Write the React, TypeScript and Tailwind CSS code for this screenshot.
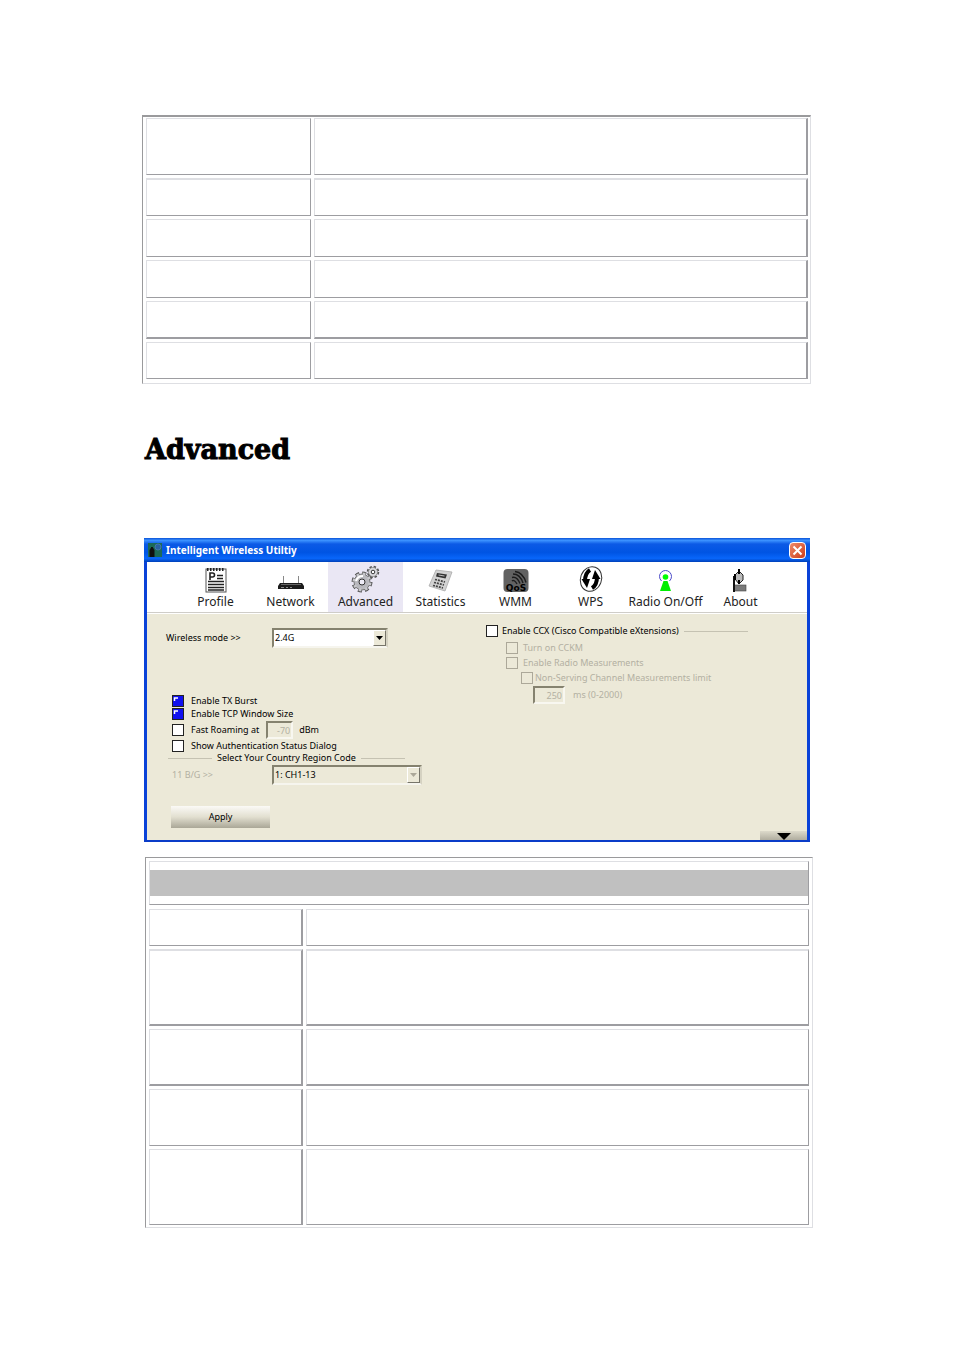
import React from 'react';

interface GridRow {
  height: string;
  edge?: string;
}

const upperRows: GridRow[] = [
  { height: 'h-[57px]' },
  { height: 'h-[38px]', edge: 'border-t-2' },
  { height: 'h-[38px]' },
  { height: 'h-[38px]' },
  { height: 'h-[38px]', edge: 'border-b-2' },
  { height: 'h-[37px]' },
];

const lowerRows: GridRow[] = [
  { height: 'h-[37px]' },
  { height: 'h-[77px]', edge: 'border-y-2' },
  { height: 'h-[57px]', edge: 'border-b-2' },
  { height: 'h-[57px]' },
  { height: 'h-[76px]' },
];

const cell = 'border border-t-[#dedfe3] border-l-[#dedfe3] border-r-[#9d9da1] border-b-[#9d9da1]';
const frame = 'block border border-t-[#9a9a9c] border-l-[#9a9a9c] border-r-[#dedfe3] border-b-[#dedfe3]';

const ProfileIcon = () => (
  <svg width="24" height="26" viewBox="0 0 24 26">
    <rect x="2" y="2" width="20" height="23" fill="#fff" stroke="#555" />
    <path d="M3 2.500h18" stroke="#222" strokeWidth="3" strokeDasharray="1.500 1.500" />
    <path d="M6 13V6h2.500q2 0 2 2t-2 2H6" fill="none" stroke="#222" strokeWidth="1.600" />
    <path d="M13 8.500h6M13 11.500h6M4 14.500h16M4 17.500h16M4 20.500h16M4 23h16" stroke="#222" strokeWidth="1.300" />
  </svg>
);

const NetworkIcon = () => (
  <svg width="28" height="24" viewBox="0 0 28 24">
    <path d="M6.500 7v8M21.500 7v8" stroke="#888" />
    <path d="M3 14h22l2 3v3H1v-3z" fill="#1c1c1c" />
    <path d="M4 15.500h20" stroke="#666" />
    <path d="M4 18.500h3M9 18.500h2M13 18.500h2" stroke="#888" />
  </svg>
);

const AdvancedIcon = () => (
  <svg width="30" height="28" viewBox="0 0 30 28">
    <circle cx="11" cy="17" r="8" fill="none" stroke="#555" strokeWidth="5" strokeDasharray="3.600 2.680" />
    <circle cx="11" cy="17" r="8" fill="#b8b8bd" stroke="#777" />
    <circle cx="11" cy="17" r="8" fill="none" stroke="#c8c8cc" strokeWidth="3" strokeDasharray="2.400 3.880" strokeDashoffset="-.6" />
    <path d="M5 16q1.500-5 7-5" fill="none" stroke="#fff" strokeWidth="2" />
    <circle cx="11" cy="17" r="3" fill="#eeecf6" stroke="#333" />
    <circle cx="22" cy="7" r="4.500" fill="none" stroke="#555" strokeWidth="3.500" strokeDasharray="2 1.534" />
    <circle cx="22" cy="7" r="4.500" fill="#dadade" stroke="#888" strokeWidth=".8" />
    <circle cx="22" cy="7" r="1.800" fill="#fff" stroke="#333" />
  </svg>
);

const StatisticsIcon = () => (
  <svg width="26" height="26" viewBox="0 0 26 26">
    <path d="M8 3L24 5 17 24 1 19z" fill="#d2d2d2" stroke="#aaa" strokeWidth=".8" />
    <path d="M9 6l10 1.500-1.500 4L8 9.500z" fill="#333" />
    <path d="M10.500 8l6 1" stroke="#bbb" />
    <path d="M7 12.500l10 2.500M6 15.500l10 2.500M5 18.500l10 2.500" stroke="#444" strokeWidth="1.800" strokeDasharray="2 1" />
  </svg>
);

const QosIcon = () => (
  <svg width="26" height="26" viewBox="0 0 26 26">
    <rect x=".5" y="2" width="25" height="23" rx="4" fill="#626262" />
    <path d="M9 14q2-2 5 3M9 10.500q5-1.500 8 6M10 7q7 0 10 9M12 4.500q8 1 11 11" fill="none" stroke="#1c1c1c" strokeWidth="1.400" />
    <text x="13" y="24" textAnchor="middle" fontSize="9" fontWeight="bold" fontFamily="DejaVu Sans, sans-serif">QoS</text>
  </svg>
);

const WpsIcon = () => (
  <svg width="26" height="28" viewBox="0 0 26 28">
    <ellipse cx="13" cy="14" rx="10.500" ry="12.500" transform="rotate(20 13 14)" fill="#fff" stroke="#333" />
    <path d="M12 5Q7 8 7 16" fill="none" stroke="#000" strokeWidth="4" />
    <path d="M3.500 14H12l-3 9z" fill="#000" />
    <path d="M14 23q5-3 5-11" fill="none" stroke="#000" strokeWidth="4" />
    <path d="M22.500 14H14l3-9z" fill="#000" />
  </svg>
);

const RadioIcon = () => (
  <svg width="24" height="26" viewBox="0 0 24 26">
    <path d="M7.500 14Q5.500 12 5.500 9.500a6 6 0 0 1 12 0q0 2.500-2 4.500" fill="none" stroke="#4a4ac8" />
    <circle cx="11.500" cy="10" r="2.800" fill="#0f0" />
    <path d="M9.500 14h4l3.500 10H6z" fill="#0e0" />
  </svg>
);

const AboutIcon = () => (
  <svg width="28" height="28" viewBox="0 0 28 28">
    <rect x="7" y="20" width="12" height="6" fill="#7a7a7a" stroke="#444" strokeWidth=".6" />
    <path d="M7 11v16" stroke="#111" strokeWidth="2" />
    <path d="M12 6l4 4v5l-4 4-4-5v-4z" fill="#bbb" stroke="#222" />
    <path d="M12 4v5M12 15v4M8 9v6" stroke="#000" strokeWidth="2" />
  </svg>
);

const tabs = [
  { name: 'Profile', icon: <ProfileIcon /> },
  { name: 'Network', icon: <NetworkIcon /> },
  { name: 'Advanced', icon: <AdvancedIcon /> },
  { name: 'Statistics', icon: <StatisticsIcon /> },
  { name: 'WMM', icon: <QosIcon /> },
  { name: 'WPS', icon: <WpsIcon /> },
  { name: 'Radio On/Off', icon: <RadioIcon /> },
  { name: 'About', icon: <AboutIcon /> },
];

interface CheckProps {
  label: string;
  checked?: boolean;
  disabled?: boolean;
  gap?: string;
}

const Check: React.FC<CheckProps> = ({ label, checked, disabled, gap = 'gap-[7px]' }) => (
  <label className={`flex items-center whitespace-nowrap ${gap} ${disabled ? 'text-[#b3b0a2]' : ''}`}>
    <span className="relative flex">
      <input
        type="checkbox"
        defaultChecked={checked}
        disabled={disabled}
        className="peer size-3 shrink-0 appearance-none border border-[#222] bg-white checked:bg-[#1010f0] disabled:border-[#aca899] disabled:bg-[#ece9d8]"
      />
      <svg
        width="12"
        height="12"
        viewBox="0 0 12 12"
        className="pointer-events-none invisible absolute inset-0 peer-checked:visible"
      >
        <path d="M2.500 6V3H6" fill="none" stroke="#fff" strokeWidth="1.500" />
      </svg>
    </span>
    {label}
  </label>
);

interface DropDownProps {
  id: string;
  value: string;
  width: string;
  disabled?: boolean;
}

const DropDown: React.FC<DropDownProps> = ({ id, value, width, disabled }) => (
  <div className={`relative h-5 ${width}`}>
    <select
      id={id}
      disabled={disabled}
      className="block size-full appearance-none border-2 border-t-[#85826f] border-r-[#d5d2c2] border-b-[#f6f5ee] border-l-[#85826f] bg-white pl-px text-black disabled:bg-[#ece9d8] disabled:opacity-100"
    >
      <option>{value}</option>
    </select>
    <span className="pointer-events-none absolute inset-y-[2px] right-[2px] flex w-[13px] items-center justify-center border border-t-white border-r-[#77756a] border-b-[#77756a] border-l-white bg-[#ece9d8]">
      <svg width="7" height="4" viewBox="0 0 7 4">
        <path d="M0 0h7L3.500 4z" fill={disabled ? '#aca899' : '#000'} />
      </svg>
    </span>
  </div>
);

const numberBox =
  'h-[18px] border-2 border-t-[#85826f] border-l-[#85826f] border-r-[#f8f7f0] border-b-[#f8f7f0] bg-[#ece9d8] pr-px text-right text-[#b3b0a2]';
const rule = 'h-0 border-t border-[#c5c2b2]';

const BlankRow: React.FC<{ row: GridRow; columns: string; first: string; last: string }> = ({
  row,
  columns,
  first,
  last,
}) => (
  <tr className={`grid gap-[3px] ${columns} ${row.height}`}>
    <td className={`${cell} ${first} ${row.edge ?? ''}`}></td>
    <td className={`${cell} ${last} ${row.edge ?? ''}`}></td>
  </tr>
);

const UtilityWindow = () => (
  <div className="bg-[#0a42d8] font-['Noto_Sans',sans-serif] text-[9px] leading-3 text-black">
    <div className="flex h-6 items-center justify-between bg-[linear-gradient(#0a52d8,#3c92ff_10%,#0c5ae6_25%,#0054e3_60%,#0866fa_85%,#0040b8)] pr-1 pl-1">
      <div className="flex items-center gap-1">
        <svg width="14" height="14" viewBox="0 0 14 14">
          <rect width="14" height="14" fill="#1c6a58" />
          <path d="M4 4v10M2 14V7l2-3 2 3v7z" fill="#111" stroke="#111" />
          <circle cx="10" cy="4" r="3" fill="#2a62a0" stroke="#47a" />
        </svg>
        <h2 className="text-[10px] font-bold text-white">Intelligent Wireless Utiltiy</h2>
      </div>
      <button
        aria-label="Close"
        className="flex size-[17px] items-center justify-center rounded-sm border border-white bg-linear-to-br from-[#ee8a68] to-[#cc3a14]"
      >
        <svg width="11" height="11" viewBox="0 0 11 11">
          <path d="M1.500 1.500l8 8M9.500 1.500l-8 8" stroke="#fff" strokeWidth="2" />
        </svg>
      </button>
    </div>

    <div className="mx-[3px]">
      <nav className="flex h-[51px] border-b border-[#cfcdc8] bg-white pl-[31px]">
        {tabs.map((tab) => (
          <button
            key={tab.name}
            className={`flex w-[75px] flex-col items-center text-xs leading-4 whitespace-nowrap text-[#222] ${
              tab.name === 'Advanced' ? 'bg-[#eae7f4]' : ''
            }`}
          >
            <span className="flex h-8 items-end pb-px">{tab.icon}</span>
            {tab.name}
          </button>
        ))}
      </nav>

      <div className="flex h-[227px] border-t border-white bg-[#ece9d8]">
        <div className="w-[320px] shrink-0 pt-[14px] pl-[19px]">
          <div className="mb-[47px] flex items-center">
            <label htmlFor="mode" className="w-[106px]">Wireless mode &gt;&gt;</label>
            <DropDown id="mode" value="2.4G" width="w-[116px]" />
          </div>

          <div className="flex flex-col gap-px pl-[6px]">
            <Check label="Enable TX Burst" checked />
            <Check label="Enable TCP Window Size" checked />
            <div className="flex items-center gap-[6px]">
              <Check label="Fast Roaming at" />
              <input
                aria-label="Fast roaming threshold"
                disabled
                defaultValue="-70"
                className={`${numberBox} ml-px w-[27px]`}
              />
              <span>dBm</span>
            </div>
            <Check label="Show Authentication Status Dialog" />
          </div>

          <div className="flex items-center gap-[5px] pl-[2px]">
            <span className={`${rule} w-11`}></span>
            <span>Select Your Country Region Code</span>
            <span className={`${rule} w-11`}></span>
          </div>
          <div className="mt-px flex items-center pl-[6px]">
            <label htmlFor="region" className="w-[100px] text-[#b3b0a2]">11 B/G &gt;&gt;</label>
            <DropDown id="region" value="1: CH1-13" width="w-[150px]" disabled />
          </div>
          <button className="mt-[21px] ml-[5px] block h-[22px] w-[99px] bg-linear-to-b from-[#fbfaf6] via-[#e2dfd0] to-[#aaa797]">
            Apply
          </button>
        </div>

        <div className="grow pt-[11px] pl-[19px]">
          <div className="mb-[5px] flex items-center gap-[5px]">
            <Check label="Enable CCX (Cisco Compatible eXtensions)" gap="gap-1" />
            <span className={`${rule} w-16`}></span>
          </div>
          <div className="flex flex-col gap-[3px] pl-5">
            <Check label="Turn on CCKM" disabled gap="gap-[5px]" />
            <Check label="Enable Radio Measurements" disabled gap="gap-[5px]" />
            <div className="pl-[15px]">
              <Check label="Non-Serving Channel Measurements limit" disabled gap="gap-[2px]" />
            </div>
          </div>
          <div className="mt-[2px] flex items-center gap-2 pl-[47px] text-[#b3b0a2]">
            <input id="limit" disabled defaultValue="250" className={`${numberBox} w-8`} />
            <label htmlFor="limit">ms (0-2000)</label>
          </div>
        </div>

        <button
          aria-label="Expand"
          className="flex h-[9px] w-[47px] items-end justify-center self-end bg-linear-to-b from-[#dddacb] to-[#b0ad9f]"
        >
          <svg width="14" height="7" viewBox="0 0 14 7">
            <path d="M0 0h14L7 7z" fill="#000" />
          </svg>
        </button>
      </div>
    </div>
    <div className="h-[2px] bg-[#0a3cc8]"></div>
  </div>
);

const App = () => (
  <main className="bg-white pt-[115px] pb-[122px]">
    <section className="pr-[143px] pl-[142px]">
      <table className={`${frame} border-t-2 pt-px pr-[2px] pb-1 pl-[3px]`}>
        <tbody className="grid gap-[3px]">
          {upperRows.map((row, i) => (
            <BlankRow key={i} row={row} columns="grid-cols-[165px_1fr]" first="" last="border-r-2" />
          ))}
        </tbody>
      </table>
    </section>

    <h1 className="mt-[50px] mb-[72px] pl-[145px] font-['DejaVu_Serif',serif] text-[27px] leading-8 font-bold text-black [-webkit-text-stroke:1px_black]">
      Advanced
    </h1>

    <section className="px-36">
      <UtilityWindow />
    </section>

    <section className="mt-[15px] pr-[141px] pl-[145px]">
      <table className={`${frame} px-[3px] pt-[3px] pb-[2px]`}>
        <thead className="mb-1 block">
          <tr className="block">
            <th className={`${cell} block py-2`}>
              <div className="h-[26px] bg-[#c0c0c0]"></div>
            </th>
          </tr>
        </thead>
        <tbody className="grid gap-[3px]">
          {lowerRows.map((row, i) => (
            <BlankRow key={i} row={row} columns="grid-cols-[154px_1fr]" first="border-r-2" last="" />
          ))}
        </tbody>
      </table>
    </section>
  </main>
);

export default App;
